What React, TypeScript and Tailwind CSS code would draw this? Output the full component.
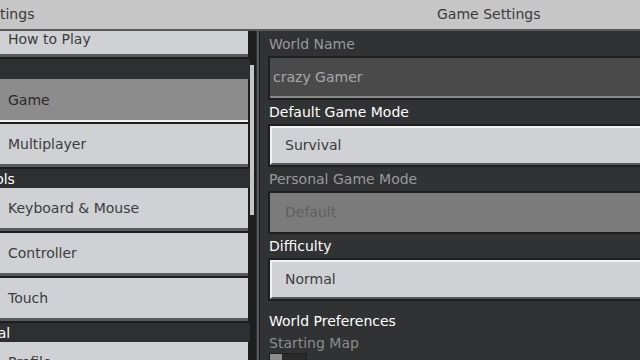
import React, { JSX } from 'react';

const font = { fontFamily: '"DejaVu Sans", "Liberation Sans", sans-serif' };

type NavItem = { label: string; selected?: boolean };

const NavButton: React.FC<NavItem & { h?: string; top?: boolean }> = ({ label, selected, h = 'h-[45px]', top }): JSX.Element => (
  <div className={`${h} shrink-0 border-r-2 border-b-2 border-[#1e1e1f]`}>
    <div
      className={
        selected
          ? 'h-full flex items-center pl-2 bg-[#8c8c8c] border-b-2 border-[#f0f0f0] text-[#2a2a2a]'
          : `h-full flex ${top ? 'items-start' : 'items-center'} pl-2 bg-[#d0d1d4] border-b-[3px] border-[#58585a] text-[#3c3c3c]`
      }
    >
      <span className={`text-[14px] leading-none ${top ? 'mt-[1px]' : ''}`}>{label}</span>
    </div>
  </div>
);

const SectionHeader: React.FC<{ label: string; shift: string }> = ({ label, shift }) => (
  <div className={`h-[19px] shrink-0 flex items-center text-white text-[14px] leading-none bg-[#2e2f31] whitespace-nowrap ${shift}`}>
    {label}
  </div>
);

const Label: React.FC<{ text: string; tone?: 'white' | 'dim' }> = ({ text, tone = 'white' }) => (
  <div
    className={`h-[24px] shrink-0 flex items-center text-[14px] leading-none ${
      tone === 'white' ? 'text-white' : 'text-[#9a9a9a]'
    }`}
  >
    {text}
  </div>
);

const Dropdown: React.FC<{ value: string; disabled?: boolean }> = ({ value, disabled }) => (
  <div className="h-[43px] shrink-0 border-2 border-r-0 border-[#1e1e1f] -ml-[1px]">
    {disabled ? (
      <div className="h-full flex items-center pl-[15px] bg-[#7b7b7b] text-[#5f5f5f] text-[14px]">{value}</div>
    ) : (
      <div className="h-full flex items-center pl-[13px] bg-[#d0d1d4] border-l-2 border-t-2 border-[#f2f2f2] border-b-2 border-b-[#58585a] text-[#3c3c3c] text-[14px]">
        {value}
      </div>
    )}
  </div>
);

const App: React.FC = (): JSX.Element => {
  return (
    <div className="w-[640px] h-[360px] overflow-hidden flex flex-col bg-[#313233]" style={font}>
      {/* title bar */}
      <div className="h-[31px] shrink-0 flex bg-[#c6c6c6] border-b-2 border-[#5a5a5a] text-[#3a3a3a] text-[14px] whitespace-nowrap">
        <div className="w-[258px] shrink-0 flex items-center -ml-[23px]">Settings</div>
        <div className="flex-1 flex items-center pl-[202px]">Game Settings</div>
      </div>

      <div className="flex-1 min-h-0 flex">
        {/* left nav */}
        <div className="w-[256px] shrink-0 flex bg-[#2e2f31] border-r border-[#1e1e1f]">
          <div className="w-[251px] flex flex-col overflow-hidden">
            <NavButton label="How to Play" h="h-[28px]" top />
            <div className="h-[20px] shrink-0" />
            <NavButton label="Game" selected />
            <NavButton label="Multiplayer" />
            <SectionHeader label="Controls" shift="-ml-[43px]" />
            <NavButton label="Keyboard & Mouse" />
            <NavButton label="Controller" />
            <NavButton label="Touch" />
            <SectionHeader label="General" shift="-ml-[45px]" />
            <NavButton label="Profile" />
          </div>
          <div className="w-[5px] relative bg-[#1e1e1f]">
            <div className="absolute left-0 top-[34px] w-[4px] h-[150px] bg-[#c6c6c6]" />
          </div>
        </div>

        {/* right panel */}
        <div className="flex-1 min-w-0 flex border-l-2 border-[#58585a] ml-[1px]">
          <div className="flex-1 min-w-0 pl-[9px] pt-[1px] flex flex-col border-l border-[#1e1e1f]">
            <Label text="World Name" tone="dim" />
            <div className="h-[44px] shrink-0 border-2 border-r-0 border-[#1e1e1f] -ml-[1px]">
              <div className="h-full flex items-center pl-[3px] bg-[#4a4a4b] border-b-2 border-[#8a8a8a] text-[#a8a8a8] text-[14px]">
                crazy Gamer
              </div>
            </div>
            <Label text="Default Game Mode" />
            <Dropdown value="Survival" />
            <Label text="Personal Game Mode" tone="dim" />
            <Dropdown value="Default" disabled />
            <Label text="Difficulty" />
            <Dropdown value="Normal" />
            <div className="h-[8px] shrink-0" />
            <Label text="World Preferences" />
            <div className="h-[20px] shrink-0 flex items-center text-[14px] leading-none text-[#8c8c8c]">Starting Map</div>
            <div className="flex">
              <div className="w-[38px] h-[10px] border border-[#1e1e1f] bg-[#2a2a2a] flex">
                <div className="w-[12px] h-full bg-[#8c8c8c]" />
              </div>
            </div>
          </div>
        </div>
      </div>
    </div>
  );
};

export default App;
